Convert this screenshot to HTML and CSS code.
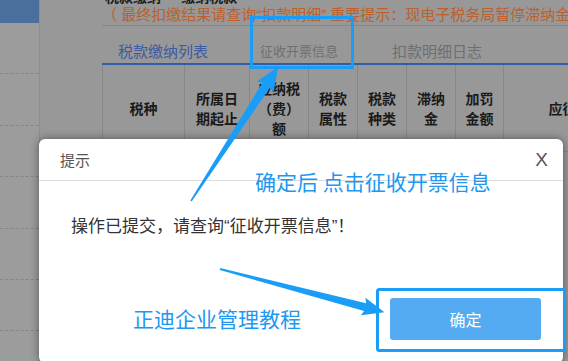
FILE: index.html
```html
<!DOCTYPE HTML>
<html>
	<head>
		<title>税款缴纳</title>
		<meta charset="utf-8" />
		<link rel="stylesheet" href="styles.css">
	</head>
	<body>
		<div class="page">
			<aside class="sidebar">
				<div class="side-top"></div>
				<div class="side-item"></div>
				<div class="side-item"></div>
				<div class="side-item"></div>
				<div class="side-item"></div>
				<div class="side-item"></div>
				<div class="side-item"></div>
			</aside>

			<main class="content">
				<div class="cut-title"><span>税款缴纳 · 缴纳税款</span></div>
				<div class="notice">（ 最终扣缴结果请查询“扣款明细” 重要提示：现电子税务局暂停滞纳金加收</div>

				<div class="tabs">
					<span class="tab active">税款缴纳列表</span>
					<span class="tab tab-invoice">征收开票信息</span>
					<span class="tab tab-log">扣款明细日志</span>
				</div>

				<table class="tax-table">
					<colgroup>
						<col style="width: 82px">
						<col style="width: 65px">
						<col style="width: 59px">
						<col style="width: 49px">
						<col style="width: 49px">
						<col style="width: 49px">
						<col style="width: 48px">
						<col style="width: 146px">
					</colgroup>
					<tr>
						<th>税种</th>
						<th>所属日期起止</th>
						<th>应纳税（费）额</th>
						<th>税款属性</th>
						<th>税款种类</th>
						<th>滞纳金</th>
						<th>加罚金额</th>
						<th>应征税额</th>
					</tr>
				</table>
			</main>
		</div>

		<div class="dialog">
			<div class="dialog-head">
				<span class="dialog-title">提示</span>
				<span class="dialog-close">X</span>
			</div>
			<div class="dialog-body">操作已提交，请查询“征收开票信息”<span class="cjk">！</span></div>
			<div class="dialog-foot">
				<button class="btn-ok">确定</button>
			</div>
		</div>

		<!-- screenshot annotations -->
		<svg class="marks" width="568" height="361" viewBox="0 0 568 361">
			<rect x="251.5" y="17.5" width="101" height="50" fill="none" stroke="#1a9df7" stroke-width="3" />
			<rect x="377.5" y="289.5" width="187" height="61" rx="2" fill="none" stroke="#1a9df7" stroke-width="3" />
			<g transform="translate(191 201) rotate(-57)">
				<polygon points="0,-0.8 138,-4.5 136,-10 160,0 136,10 138,4.5 0,0.8" fill="#1a9df7" />
			</g>
			<g transform="translate(220 269) rotate(14.7)">
				<polygon points="0,-1 150,-4 148,-9 170,0 148,9 150,4 0,1" fill="#1a9df7" />
			</g>
		</svg>
		<div class="note note-top">确定后 点击征收开票信息</div>
		<div class="note note-bottom">正迪企业管理教程</div>
	</body>
</html>
```

FILE: styles.css
```css
body {
	margin: 0;
	padding: 0;
	width: 568px;
	height: 361px;
	overflow: hidden;
	background: #999;
	font-family: "Noto Sans CJK SC", "Liberation Sans", sans-serif;
	position: relative;
}

.page {
	display: flex;
	height: 100%;
}

.sidebar {
	width: 39px;
	flex-shrink: 0;
	background: #9c9c9c;
}

.side-top {
	height: 23px;
	background: #4b6f9c;
}

.side-item {
	height: 50.4px;
	border-bottom: 1px dashed #858585;
}

.content {
	flex: 1;
	padding-left: 62px;
	border-left: 1px solid #8e8e8e;
	background: #989898;
	min-width: 0;
	overflow: hidden;
}

.cut-title {
	height: 5px;
	overflow: hidden;
}

.cut-title span {
	display: block;
	margin-top: -11px;
	margin-left: 3px;
	font-size: 14px;
	line-height: 14px;
	font-weight: bold;
	color: #1c1c1c;
}

.notice {
	height: 20px;
	line-height: 20px;
	font-family: "Liberation Sans", "Noto Sans CJK SC", sans-serif;
	font-size: 15px;
	color: #bd602b;
	white-space: nowrap;
	overflow: hidden;
	border-bottom: 1px solid #878787;
}

.tabs {
	display: flex;
	height: 37px;
	align-items: center;
}

.tab {
	font-size: 15px;
	color: #6f6f6f;
	line-height: 20px;
	padding-top: 13px;
}

.tab.active {
	color: #3d5ba3;
	padding: 13px 16px 0 16px;
}

.tab-invoice {
	font-size: 13px;
	margin-left: 36px;
}

.tab-log {
	margin-left: 54px;
}

.tax-table {
	border-collapse: collapse;
	table-layout: fixed;
	width: 547px;
	border-top: 2px solid #2f5ea9;
}

.tax-table th {
	height: 86px;
	padding: 0 8px;
	border: 1px solid #878787;
	border-top: none;
	font-size: 14px;
	line-height: 20px;
	font-weight: bold;
	color: #1a1a1a;
	text-align: center;
	vertical-align: middle;
}

.dialog {
	position: absolute;
	left: 39px;
	top: 139px;
	width: 524px;
	height: 224px;
	background: #fff;
	border-radius: 6px;
	box-shadow: 0 0 8px rgba(0, 0, 0, 0.45);
}

.dialog-head {
	height: 41px;
	border-bottom: 1px solid #dcdcdc;
	display: flex;
	align-items: center;
	justify-content: space-between;
	padding: 0 15px 0 21px;
}

.dialog-title {
	font-size: 15px;
	color: #555;
}

.dialog-close {
	font-family: "Liberation Sans", sans-serif;
	font-size: 19px;
	color: #555;
}

.dialog-body {
	padding: 33px 0 0 32px;
	font-family: "Liberation Sans", "Noto Sans CJK SC", sans-serif;
	font-size: 17px;
	line-height: 22px;
	color: #333;
}

.dialog-body .cjk {
	font-family: "Noto Sans CJK SC", sans-serif;
}

.dialog-foot {
	display: flex;
	justify-content: flex-end;
	padding: 60px 22px 0 0;
}

.btn-ok {
	width: 151px;
	height: 42px;
	border: none;
	border-radius: 3px;
	background: #55abf1;
	color: #fff;
	font-family: "Noto Sans CJK SC", sans-serif;
	font-size: 16px;
}

.marks {
	position: absolute;
	left: 0;
	top: 0;
}

.note {
	position: absolute;
	font-size: 21px;
	line-height: 24px;
	color: #2098f1;
	white-space: nowrap;
}

.note-top {
	left: 255px;
	top: 169px;
}

.note-bottom {
	left: 133px;
	top: 306px;
}
```
